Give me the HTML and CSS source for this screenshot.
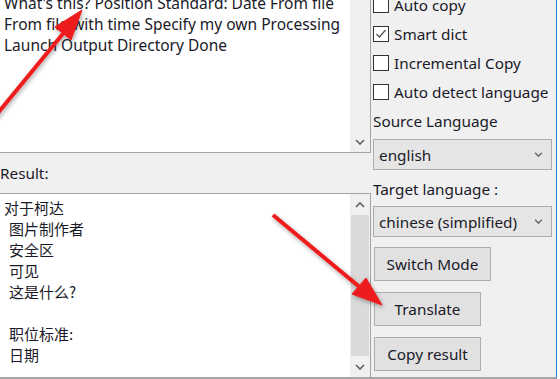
FILE: index.html
```html
<!DOCTYPE html>
<html>
<head>
  <title>Translator</title>
  <link rel="stylesheet" href="styles.css">
</head>
<body>
  <div class="window">
    <div class="left">
      <div class="textbox source">
        <div class="text">
          <div>What's this? Position Standard: Date From file</div>
          <div>From file with time Specify my own Processing</div>
          <div>Launch Output Directory Done</div>
        </div>
        <div class="scrollbar">
          <div class="track"></div>
          <div class="step">
            <svg viewBox="0 0 10 6"><path d="M1 1l4 4 4-4" /></svg>
          </div>
        </div>
      </div>

      <div class="result-label">Result:</div>

      <div class="textbox result">
        <div class="text">
          <div>对于柯达</div>
          <div class="indent">图片制作者</div>
          <div class="indent">安全区</div>
          <div class="indent">可见</div>
          <div class="indent">这是什么?</div>
          <div class="indent">&nbsp;</div>
          <div class="indent">职位标准:</div>
          <div class="indent">日期</div>
        </div>
        <div class="scrollbar">
          <div class="step">
            <svg viewBox="0 0 10 6"><path d="M1 5l4-4 4 4" /></svg>
          </div>
          <div class="track thumb"></div>
          <div class="step">
            <svg viewBox="0 0 10 6"><path d="M1 1l4 4 4-4" /></svg>
          </div>
        </div>
      </div>
    </div>

    <div class="right">
      <label class="check first"><span class="box"></span>Auto copy</label>
      <label class="check">
        <span class="box">
          <svg viewBox="0 0 14 14"><path d="M2.5 7l3 3 6-7" /></svg>
        </span>Smart dict
      </label>
      <label class="check"><span class="box"></span>Incremental Copy</label>
      <label class="check"><span class="box"></span>Auto detect language</label>

      <div class="field-label">Source Language</div>
      <div class="select source-select">
        <span>english</span>
        <svg viewBox="0 0 10 6"><path d="M1 1l4 4 4-4" /></svg>
      </div>

      <div class="field-label target">Target language :</div>
      <div class="select target-select">
        <span>chinese (simplified)</span>
        <svg viewBox="0 0 10 6"><path d="M1 1l4 4 4-4" /></svg>
      </div>

      <button class="switch">Switch Mode</button>
      <button>Translate</button>
      <button>Copy result</button>
    </div>
  </div>

  <svg class="annotations" viewBox="0 0 560 379">
    <defs>
      <filter id="shadow" x="-20%" y="-20%" width="140%" height="140%">
        <feDropShadow dx="1" dy="2" stdDeviation="2" flood-color="#000" flood-opacity="0.35" />
      </filter>
    </defs>
    <g filter="url(#shadow)" fill="#ee1b1b" stroke="#ee1b1b">
      <line x1="-12" y1="125" x2="66" y2="30" stroke-width="4" />
      <polygon points="82,10 71,40 55,27" stroke-width="1" />
      <line x1="273" y1="215" x2="362" y2="289" stroke-width="4" />
      <polygon points="382,305 352,294 366,278" stroke-width="1" />
    </g>
  </svg>
</body>
</html>
```

FILE: styles.css
```css
:root {
  --panel-color: #f0f0f0;
  --text-color: #1a1a28;
  --border-color: #a3a3a3;
  --scroll-track: #f0f0f0;
  --scroll-thumb: #dadada;
  --control-bg: #e5e5e5;
  --control-border: #adadad;
  --window-border: #2a7bd6;
}

body {
  margin: 0;
  width: 560px;
  height: 379px;
  overflow: hidden;
  background: #fafafa;
  font-family: 'Noto Sans', 'Noto Sans CJK SC', sans-serif;
  font-size: 15.3px;
  color: var(--text-color);
  position: relative;
}

.window {
  display: flex;
  width: 556px;
  height: 377px;
  background: var(--panel-color);
  border-right: 1px solid var(--window-border);
  border-bottom: 2px solid #a6a6a6;
}

.left {
  width: 371px;
  display: flex;
  flex-direction: column;
}

.textbox {
  display: flex;
  background: #ffffff;
  border-right: 1px solid var(--border-color);
  overflow: hidden;
}

.textbox.source {
  height: 152px;
  border-bottom: 1px solid var(--border-color);
}

.textbox.result {
  flex: 1;
  border-top: 1px solid var(--border-color);
}

.text {
  flex: 1;
  padding-left: 4px;
  line-height: 21px;
  white-space: nowrap;
  overflow: hidden;
}

.source .text {
  margin-top: -7px;
  font-size: 15.5px;
}

.result .text {
  font-family: 'Noto Sans CJK SC', sans-serif;
  font-size: 15px;
  padding-top: 3px;
}

.result .indent {
  padding-left: 5px;
}

.scrollbar {
  width: 20px;
  display: flex;
  flex-direction: column;
  background: var(--scroll-track);
}

.scrollbar .track {
  flex: 1;
}

.scrollbar .thumb {
  background: var(--scroll-thumb);
  margin: 0 1px;
}

.step {
  height: 21px;
  display: flex;
  align-items: center;
  justify-content: center;
}

.step svg {
  width: 10px;
  height: 6px;
}

.step path,
.select path {
  fill: none;
  stroke: #606060;
  stroke-width: 1.6;
}

.result-label {
  height: 40px;
  display: flex;
  align-items: center;
}

.right {
  flex: 1;
  display: flex;
  flex-direction: column;
  align-items: flex-start;
  padding-left: 2px;
}

.check {
  display: flex;
  align-items: center;
  gap: 5px;
  height: 29px;
  white-space: nowrap;
}

.check.first {
  margin-top: -10px;
}

.box {
  width: 14px;
  height: 14px;
  border: 1px solid #333333;
  background: #ffffff;
  display: flex;
}

.box svg {
  width: 14px;
  height: 14px;
}

.box path {
  fill: none;
  stroke: #555555;
  stroke-width: 1.3;
}

.field-label {
  height: 29px;
  display: flex;
  align-items: center;
  white-space: nowrap;
}

.field-label.target {
  margin-top: 4px;
}

.select {
  box-sizing: border-box;
  width: 179px;
  height: 31px;
  margin-top: 4px;
  display: flex;
  align-items: center;
  justify-content: space-between;
  padding: 0 8px 0 5px;
  background: var(--control-bg);
  border: 1px solid var(--control-border);
  white-space: nowrap;
}

.select svg {
  width: 9px;
  height: 5px;
}

.target-select {
  margin-top: 3px;
}

button {
  box-sizing: border-box;
  height: 34px;
  width: 107px;
  margin: 11px 0 0 1px;
  padding: 0;
  font-family: inherit;
  font-size: 15.3px;
  color: var(--text-color);
  background: #e1e1e1;
  border: 1px solid var(--control-border);
}

button.switch {
  width: 117px;
  margin-top: 10px;
}

.annotations {
  position: absolute;
  left: 0;
  top: 0;
  width: 560px;
  height: 379px;
  pointer-events: none;
}
```
